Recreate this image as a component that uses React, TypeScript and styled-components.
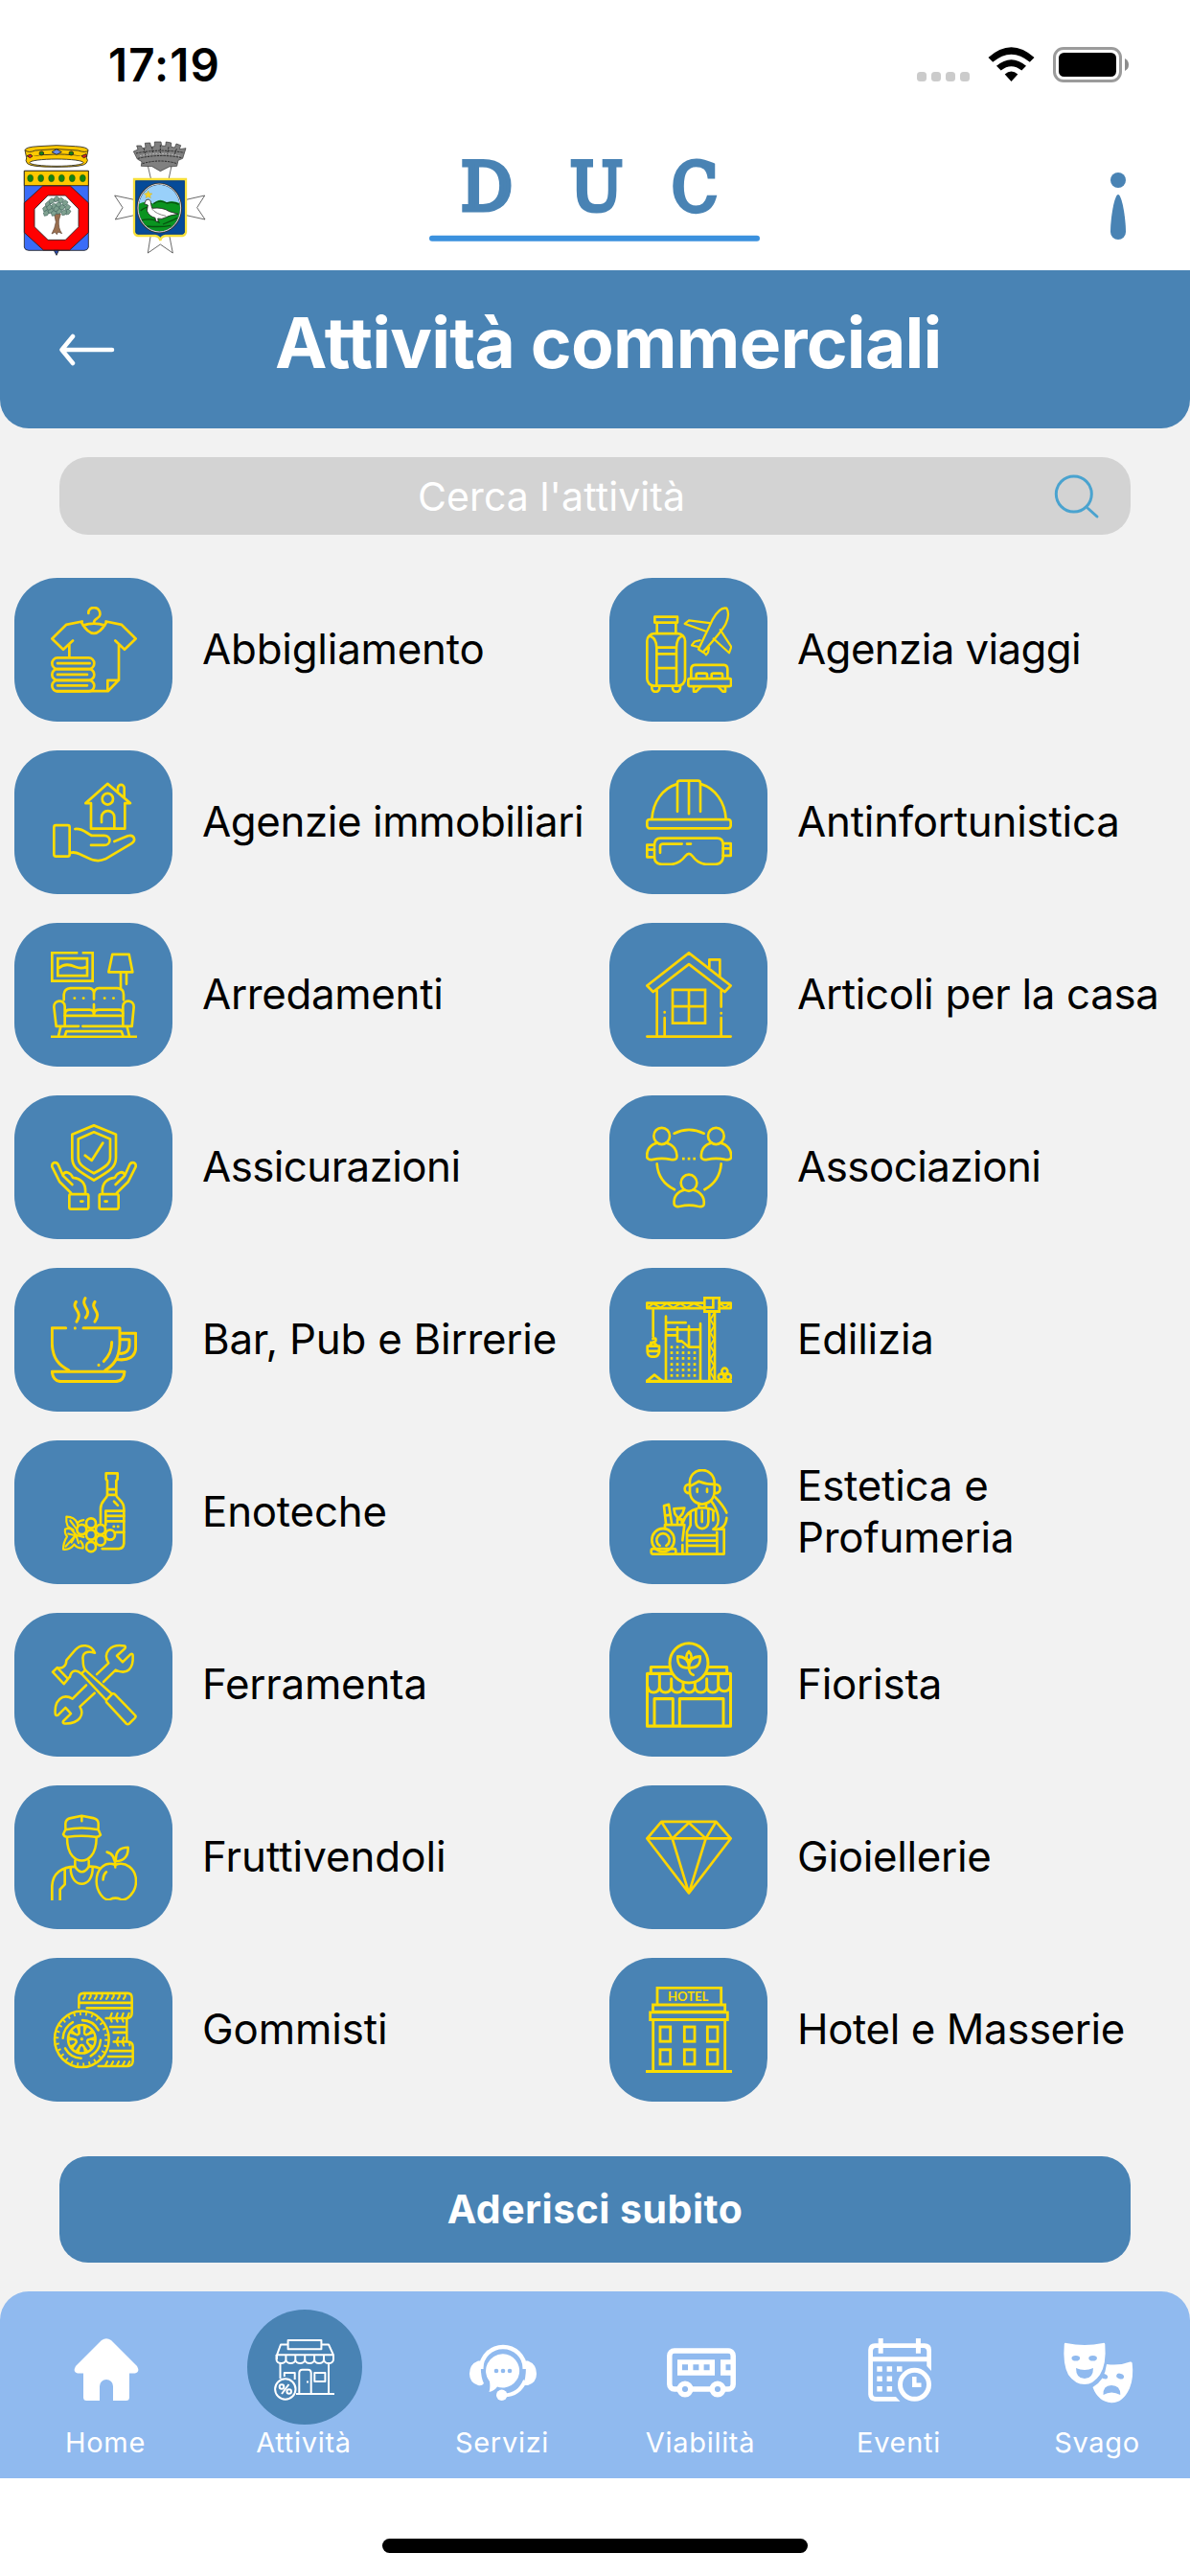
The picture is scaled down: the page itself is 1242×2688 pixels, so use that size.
import React from "react";
import styled, { createGlobalStyle, css } from "styled-components";

const BLUE = "#4983b4";
const BAR = "#90baef";
const YELLOW = "#fbdc00";
const GOLD = "#ffd500";

const GlobalStyle = createGlobalStyle`
  * {
    box-sizing: border-box;
  }

  body {
    margin: 0;
    background: #fff;
    font-family: Inter, "Liberation Sans", sans-serif;
  }
`;

const Page = styled.div`
  width: 1242px;
  height: 2688px;
  display: flex;
  flex-direction: column;
  background: #fff;
  overflow: hidden;
`;

const StatusBar = styled.div`
  height: 130px;
  flex: none;
  display: flex;
  justify-content: space-between;
  align-items: flex-start;
  padding: 39px 62px 0 113px;
`;

const Clock = styled.span`
  font-size: 47.5px;
  font-weight: 600;
  line-height: 58px;
  letter-spacing: 1.1px;
`;

const StatusIcons = styled.svg`
  width: 223px;
  height: 40px;
  margin-top: 9px;
`;

const Header = styled.header`
  height: 152px;
  flex: none;
  display: flex;
  justify-content: space-between;
  padding: 0 62px 0 10px;
`;

const Crests = styled.svg`
  width: 220px;
  height: 150px;
`;

const Logo = styled.svg`
  width: 345px;
  height: 130px;
  margin-right: 143px;
`;

const InfoIcon = styled.svg`
  width: 26px;
  height: 130px;
`;

const Main = styled.main`
  height: 2109px;
  flex: none;
  background: #f2f2f2;
`;

const TitleBar = styled.div`
  height: 165px;
  display: flex;
  align-items: flex-start;
  padding: 0 260px 0 62px;
  background: ${BLUE};
  border-radius: 0 0 30px 30px;
`;

const BackArrow = styled.svg`
  width: 58px;
  height: 34px;
  margin-top: 66px;
  flex: none;
`;

const Title = styled.h1`
  flex: 1;
  margin: 32px 0 0 167px;
  font-size: 73px;
  font-weight: 700;
  line-height: 88px;
  letter-spacing: -0.75px;
  white-space: nowrap;
  color: #fff;
`;

const Search = styled.div`
  height: 81px;
  margin: 30px 62px 45px;
  display: flex;
  align-items: center;
  justify-content: space-between;
  padding: 0 30px 0 374px;
  border-radius: 30px;
  background: #d3d3d3;
`;

const Placeholder = styled.span`
  font-size: 41px;
  line-height: 50px;
  letter-spacing: 0.1px;
  color: #fff;
  white-space: nowrap;
`;

const SearchIcon = styled.svg`
  width: 50px;
  height: 50px;
`;

const Grid = styled.div`
  display: grid;
  grid-template-columns: 621px 621px;
  grid-auto-rows: 150px;
  row-gap: 30px;
`;

const Cell = styled.div`
  display: flex;
  align-items: center;
  padding-left: 15px;
`;

const Tile = styled.div`
  width: 165px;
  height: 150px;
  flex: none;
  display: flex;
  align-items: center;
  justify-content: center;
  border-radius: 45px;
  background: ${BLUE};
`;

const TileSvg = styled.svg<{ $gold?: boolean }>`
  width: 90px;
  height: 90px;
  fill: none;
  stroke: ${({ $gold }) => ($gold ? GOLD : YELLOW)};
  stroke-width: 8;
  stroke-linecap: round;
  stroke-linejoin: round;
`;

const Label = styled.span<{ $spacing?: number }>`
  flex: 1;
  padding-left: 31px;
  font-size: 43.8px;
  line-height: 54px;
  letter-spacing: ${({ $spacing = -0.2 }) => $spacing}px;
  color: #000;
`;

const JoinButton = styled.button`
  display: block;
  width: 1118px;
  height: 111px;
  margin: 57px 62px 0;
  padding: 0 0 2px;
  border: 0;
  border-radius: 30px;
  background: ${BLUE};
  color: #fff;
  font-family: inherit;
  font-size: 41px;
  font-weight: 700;
  letter-spacing: 0.5px;
`;

const TabsBack = styled.div`
  flex: none;
  background: #f2f2f2;
`;

const Tabs = styled.nav`
  height: 195px;
  display: grid;
  grid-template-columns: repeat(6, 207px);
  padding: 19px 0 0 7px;
  border-radius: 30px 30px 0 0;
  background: ${BAR};
`;

const Tab = styled.div`
  display: flex;
  flex-direction: column;
  align-items: center;
`;

const TabCircle = styled.div<{ $active?: boolean }>`
  width: 120px;
  height: 120px;
  display: flex;
  align-items: center;
  justify-content: center;
  padding-top: 4px;
  border-radius: 50%;
  ${({ $active }) => $active && css`
    background: ${BLUE};
  `}
`;

const TabSvg = styled.svg`
  width: 72px;
  height: 72px;
  overflow: visible;
`;

const TabLabel = styled.span`
  font-size: 29px;
  line-height: 37px;
  margin-right: 1px;
  letter-spacing: 0.7px;
  color: #fff;
`;

const HomeIndicator = styled.div`
  width: 444px;
  height: 15px;
  margin: 63px auto 0;
  border-radius: 8px;
  background: #000;
`;

interface TileIconProps {
  x: number;
  y: number;
  gold?: boolean;
  children: React.ReactNode;
}

// Each drawing keeps its own origin, the drawing area is always 270 x 261
const TileIcon = ({ x, y, gold, children }: TileIconProps) => (
  <TileSvg viewBox={`${x} ${y} 270 261.3`} preserveAspectRatio="none" $gold={gold}>
    {children}
  </TileSvg>
);

const Clothes = () => (
  <TileIcon x={159} y={125} gold>
    <path d="M277 145C276 121 316 122 313 150C311 163 294 159 294 174M255 173Q294 239 333 173M260 182Q294 170 328 182" />
    <path d="M257 170L207 180L163 222L198 255L228 228M217 238V278M332 170L381 180L425 222L390 255L361 228M372 240V347L338 381H178M372 348H337V381" />
    <rect x="163" y="280" width="132" height="34" rx="17" />
    <rect x="163" y="314" width="132" height="34" rx="17" />
    <rect x="163" y="348" width="132" height="33.5" rx="17" />
    <path d="M180 297H281M180 331H273M180 364H273" />
  </TileIcon>
);

const Travel = () => (
  <TileIcon x={162} y={125}>
    <path d="M190 156H261V173H190ZM197 175V205M256 175V205" />
    <rect x="166" y="207" width="119" height="158" rx="22" />
    <path d="M176 214Q196 222 196 250V365M274 214Q258 222 258 250V365M196 249H258M196 268H258M196 311H258" />
    <path d="M181 367V372a12 11 0 0 0 24 0V367M246 367V372a12 11 0 0 0 24 0V367" />
    <path d="M327 254L372 163Q394 125 415 130Q426 148 413 176Q404 196 341 263Z" strokeWidth="7" />
    <path d="M362 175L297 167L284 177L348 199M395 195L430 247L423 265L374 222M332 227L315 231L306 242L326 247M346 257L360 249L357 264L351 271L342 262" strokeWidth="6.5" />
    <path d="M304 342V315Q304 303 316 302H407Q418 303 418 315V342M320 342V331Q320 327 326 327H349Q354 327 354 332V342M368 342V331Q368 327 374 327H397Q402 327 402 332V342" />
    <rect x="295" y="343" width="134" height="23" rx="5" />
    <path d="M312 367V382H320L336 367M411 367V382H403L388 367" />
  </TileIcon>
);

const RealEstate = () => (
  <TileIcon x={159} y={647}>
    <path d="M268 720L337 661L408 720H391V797H285V720ZM369 682V674a10 10 0 0 1 20 0V702M318 778V763a20 20 0 0 1 40 0V795" />
    <circle cx="337" cy="707" r="17" />
    <rect x="169" y="787" width="49" height="94" rx="6" />
    <path d="M235 798C262 796 270 811 287 818H326C349 818 349 847 326 847H285M358 836L400 819C420 813 427 832 412 842L330 889C302 901 285 890 250 874Q236 867 220 870" />
  </TileIcon>
);

const SafetyGear = () => (
  <TileIcon x={162} y={647}>
    <path d="M181 768C185 715 215 675 260 662M335 662C378 675 410 715 413 768M261 745V660Q261 652 269 652H325Q333 652 333 660V745M297 652V752" />
    <rect x="166" y="769" width="262" height="27" rx="8" />
    <path d="M208 826H385Q404 826 404 846V884Q402 904 380 905H350Q325 903 308 880Q297 866 286 880Q268 903 243 905H212Q190 904 189 884V846Q190 826 208 826Z" />
    <path d="M189 846H166V883H189M166 861H189M404 842H428V879H404M404 857H428M207 870V850Q208 843 216 843H275M291 843H303" />
  </TileIcon>
);

const Furniture = () => (
  <TileIcon x={159} y={1170}>
    <path d="M244 1173H163V1259H290V1173H257M181 1191H273V1243H181ZM184 1220Q205 1202 235 1216Q255 1224 271 1216" strokeLinecap="butt" strokeLinejoin="miter" />
    <path d="M352 1178H404L415 1232H340ZM378 1236V1282M396 1236V1268" />
    <path d="M200 1316V1300Q202 1282 220 1281H280Q294 1283 294 1297V1314M294 1330V1362M294 1297Q296 1282 310 1281H368Q387 1282 387 1300V1316M233 1311h1M261 1311h1M327 1311h1M355 1311h1" />
    <path d="M203 1396H176L169 1338C168 1316 200 1313 203 1335ZM385 1396H413L419 1338C420 1316 388 1313 385 1335Z" />
    <path d="M204 1358Q205 1346 218 1346H280Q294 1347 294 1358Q296 1346 310 1346H372Q384 1346 385 1358M203 1364H385M203 1396H246M259 1396H385" />
    <path d="M190 1398L183 1426M398 1398L405 1426M203 1426L208 1411H380L386 1426M159 1428H429" strokeLinecap="butt" />
  </TileIcon>
);

const House = () => (
  <TileIcon x={162} y={1170} gold>
    <path d="M166 1273L297 1174L428 1273L409 1292L297 1208L185 1292ZM361 1218V1194H394V1245M197 1288V1426M398 1288V1337M398 1356v1M398 1371V1426M221 1353v1M221 1371V1426M166 1427H428" />
    <path d="M246 1286H348V1387H246ZM297 1286V1387M246 1336H348" strokeLinejoin="miter" />
  </TileIcon>
);

const Hand = () => (
  <>
    <path d="M222 333L187 300L163 254C161 238 180 237 184 252L198 282L226 308M199 276C205 266 222 272 228 287C255 290 270 305 267 335" />
    <rect x="217" y="337" width="60" height="45" rx="5" />
    <path d="M253 359H259" />
  </>
);

const Insurance = () => (
  <TileIcon x={159} y={125}>
    <path d="M294 129L363 156V227C363 255 345 266 294 295C243 266 226 255 226 227V156Z" />
    <path d="M294 149L345 170V225C345 245 332 254 294 274C256 254 245 245 245 225V170ZM266 220L287 235L322 182" />
    <Hand />
    <g transform="translate(588 0) scale(-1 1)">
      <Hand />
    </g>
  </TileIcon>
);

const Person = () => (
  <>
    <circle cx="212" cy="161" r="25" />
    <path d="M198 182C175 187 163 205 166 226Q170 235 185 232Q212 226 240 232Q257 235 259 226C262 205 248 187 226 182" />
  </>
);

const Associations = () => (
  <TileIcon x={162} y={125}>
    <Person />
    <g transform="translate(170 0)"><Person /></g>
    <g transform="translate(85 142)"><Person /></g>
    <path d="M251 153Q297 131 344 153M197 245C200 285 220 308 252 323M398 245C395 285 375 308 346 323" />
    <path d="M276 230h8M293 230h8M310 230h8" strokeLinecap="butt" />
  </TileIcon>
);

const Coffee = () => (
  <TileIcon x={159} y={647} gold>
    <g strokeWidth="9">
      <path d="M238 663C222 685 262 690 240 723M267 652C251 676 290 684 268 711M297 663C281 685 321 690 297 723" />
      <path d="M206 742H163V790C165 835 185 855 215 870M261 742H375V790C373 835 355 855 330 870M235 742v.5M309 854v.5" />
      <path d="M378 758H425V800C425 830 400 842 366 837M378 777H405V795C404 812 392 821 375 819M350 785C350 810 343 825 325 843" />
      <path d="M163 874H390C389 892 380 904 362 904H190C175 904 164 892 163 874Z" />
    </g>
  </TileIcon>
);

const dotRows = [800, 817, 834, 852, 869, 886];
const dotCols = [243, 261, 279, 297, 315];

const Construction = () => (
  <TileIcon x={162} y={647}>
    <path d="M345 666H166V682H345M392 666H428V682H392M361 692V900M378 692V900" />
    <path d="M168 680L186 668L208 680L228 668L248 680L270 668L290 680L312 668L342 680M394 668L410 679L427 668" strokeWidth="6" />
    <path d="M376 698L364 716L376 736L364 756L376 776L364 796L376 816L364 836L376 856L364 876L376 896" strokeWidth="6" />
    <path d="M346 651H392V692H346ZM373 654V680H350" strokeLinejoin="miter" />
    <path d="M185 685V768M184 775Q196 770 193 781Q188 788 178 786M171 797L185 785L199 797M167 797H204V814Q202 828 190 829H180Q168 828 167 814ZM172 812H200" />
    <path d="M225 707V900M333 729V900M225 726H287M225 747H333M225 764H260M261 740V782H275L297 800H333M297 737V800" />
    {dotRows.map((y, i) =>
      dotCols
        .filter((x) => i > 0 || x < 290)
        .map((x) => <path key={`${x}-${y}`} d={`M${x - 4} ${y}h8`} strokeLinecap="butt" />)
    )}
    <path d="M166 902L189 884L213 902" />
    <path d="M162 904H432" strokeWidth="10" strokeLinecap="butt" />
    <circle cx="398" cy="890" r="9" />
    <circle cx="420" cy="890" r="9" />
    <circle cx="409" cy="873" r="9" />
  </TileIcon>
);

const Wine = () => (
  <TileIcon x={159} y={1170}>
    <path d="M336 1250V1205L332 1200V1183H368V1200L364 1205V1250C370 1264 388 1266 388 1290V1395Q386 1411 372 1411H320M336 1250C330 1264 315 1268 315 1290V1332M336 1231H364M336 1248H364M357 1268L369 1280" />
    <path d="M388 1297H331V1340M331 1312H388M331 1328H388M356 1344h1M369 1344h1M364 1361H388" />
    <circle cx="285" cy="1334" r="15" />
    <circle cx="256" cy="1353" r="15" />
    <circle cx="315" cy="1353" r="15" />
    <circle cx="285" cy="1369" r="15" />
    <circle cx="345" cy="1369" r="15" />
    <circle cx="315" cy="1386" r="15" />
    <circle cx="285" cy="1405" r="15" />
    <path d="M262 1324Q248 1326 242 1334Q234 1314 208 1314Q206 1330 212 1343L230 1354M240 1352L220 1326M242 1334L244 1345M230 1356Q216 1346 204 1352Q202 1366 210 1374Q198 1392 198 1413Q220 1415 232 1398Q244 1412 260 1409Q262 1398 252 1388M206 1404L236 1371L214 1366M236 1371L224 1392M238 1371L246 1394M238 1369L226 1356M238 1370L262 1376" strokeWidth="6.5" />
  </TileIcon>
);

const Beauty = () => (
  <TileIcon x={162} y={1170}>
    <path d="M300 1218C294 1158 382 1158 377 1218M300 1218V1240C305 1288 372 1288 377 1240V1218M301 1222L328 1207Q350 1216 376 1216M299 1216C279 1216 279 1243 299 1243M379 1216C400 1216 400 1243 379 1243M323 1230V1239M354 1230V1239M328 1278V1287H351V1278" />
    <path d="M379 1255Q405 1280 415 1302M415 1318C413 1345 395 1357 373 1352C386 1345 392 1335 388 1310Q382 1285 368 1268" />
    <path d="M322 1290C300 1295 285 1310 278 1332M355 1290Q366 1288 376 1298M319 1294V1330C320 1357 357 1357 358 1330V1294M338 1297V1330M302 1302V1340L291 1360V1425M373 1302V1325" />
    <path d="M295 1371H385M295 1387H385M295 1402H385M385 1362V1425M388 1352H407V1427H256" />
    <path d="M225 1335L219 1281L234 1277L243 1333M223 1311L238 1308M250 1290L283 1288L277 1305L264 1320L253 1305ZM261 1333V1322H275V1333M222 1347V1339H283L277 1386M277 1400V1425" />
    <circle cx="216" cy="1385" r="35" />
    <path d="M206 1402A20 20 0 1 1 226 1402" />
    <rect x="179" y="1411" width="77" height="16" rx="6" />
  </TileIcon>
);

const Tools = () => (
  <TileIcon x={159} y={125}>
    <path d="M180 204C196 208 208 198 208 181L235 151C252 131 285 132 297 159C272 152 256 158 260 182C260 195 263 205 267 211L255 222C238 208 222 212 219 232L211 237" strokeWidth="7.5" />
    <path d="M165 217L179 204L213 238L200 253ZM267 211L350 283M255 222L332 302M352 283L333 302V308L396 374Q400 377 404 374L422 357Q427 352 423 348L360 285Q356 281 352 283" strokeWidth="7.5" />
    <path d="M303 224L340 190C320 160 345 130 390 138Q395 141 391 146L366 168L384 187L409 163Q416 160 416 168C418 205 400 228 362 211L324 247" strokeWidth="7.5" />
    <path d="M296 281L250 322C265 345 250 375 202 373Q195 372 198 366L222 343L205 325L181 348Q173 350 173 342C170 305 195 280 227 298L270 257" strokeWidth="7.5" />
  </TileIcon>
);

const Florist = () => (
  <TileIcon x={162} y={125}>
    <g strokeWidth="9">
      <circle cx="297" cy="190" r="60" />
      <path d="M238 202H178V219M356 202H416V219M242 222H166.5V381H427.5V222H352M189 378V298H247V378M268 378V298H405V378" />
      <path d="M168 262a18.5 17 0 0 0 37 0a18.5 17 0 0 0 37 0a18.5 17 0 0 0 37 0a18.5 17 0 0 0 37 0a18.5 17 0 0 0 37 0a18.5 17 0 0 0 37 0a18.5 17 0 0 0 36 0M205 226V262M242 238V262M279 250V262M316 250V262M353 238V262M389 226V262" />
      <path d="M297 155Q281 170 297 184Q313 170 297 155M297 204C270 206 260 192 262 170C284 170 297 182 297 204C297 182 310 170 332 170C334 192 324 206 297 204Q298 222 311 226" strokeWidth="8" />
    </g>
  </TileIcon>
);

const Greengrocer = () => (
  <TileIcon x={159} y={647}>
    <path d="M205 690V675Q206 662 222 659L256 652L292 659Q307 662 308 675V690M256 652V668M205 694Q256 684 308 694L315 710Q308 718 298 716Q256 710 212 716Q202 717 198 708Z" strokeWidth="7.5" />
    <path d="M210 718C210 775 240 788 256 788C272 788 302 775 302 718M235 788V806Q245 822 256 822Q268 822 278 806V788M221 808C220 875 292 875 290 808" strokeWidth="7.5" />
    <path d="M163 907V865C165 825 195 806 235 806M278 806Q300 805 312 811M203 812V860L188 875V907" />
    <path d="M361 801C330 788 302 812 302 850C302 880 325 912 345 905Q361 898 378 905C400 912 426 880 426 850C426 812 392 788 361 801M361 808C361 780 350 765 335 762M363 790C360 760 375 748 401 748C402 775 390 788 363 790M333 822Q322 832 323 846" strokeWidth="7.5" />
  </TileIcon>
);

const Jewelry = () => (
  <TileIcon x={162} y={647} gold>
    <path d="M211 670H382L428 721L297 886L166 721ZM166 721H428M211 670L245 721L297 673L350 721L382 670M245 721L297 886L350 721" />
  </TileIcon>
);

const spokes = [0, 72, 144, 216, 288];

const Tyres = () => (
  <TileIcon x={159} y={1170}>
    <g strokeWidth="7.5">
      <circle cx="256" cy="1329" r="85" />
      <circle cx="256" cy="1329" r="77" strokeDasharray="5.5 13.1" strokeWidth="10" strokeLinecap="butt" />
      <circle cx="256" cy="1329" r="43" />
      <circle cx="256" cy="1329" r="2" strokeWidth="6" />
      {spokes.map((a) => (
        <path key={a} transform={`rotate(${a} 256 1329)`} d="M248 1290V1312Q241 1322 226 1305M264 1290V1312Q271 1322 286 1305" strokeWidth="6.5" />
      ))}
      <path d="M197 1326A60 60 0 0 1 228 1278M258 1272A58 58 0 0 1 308 1302M315 1332A60 60 0 0 1 284 1380M254 1387A60 60 0 0 1 204 1357" />
      <path d="M247 1234V1205Q247 1190 262 1190H400Q413 1190 413 1205V1250Q413 1264 400 1266M249 1219H411M272 1235H411" />
      <path d="M332 1266H400M397 1270V1335M345 1292H395M356 1309H395M356 1337H400Q416 1338 416 1352V1397Q414 1411 400 1411H308M345 1365H414M339 1382H414" />
      <path d="M266 1194v6l-5 7M284 1194v6l-5 7M302 1194v6l-5 7M320 1194v6l-5 7M338 1194v6l-5 7M356 1194v6l-5 7M374 1194v6l-5 7M392 1194v6l-5 7" strokeWidth="6.5" />
      <path d="M350 1251l-5 13l5 12M368 1251l-5 13l5 12M386 1251l-5 13l5 12M404 1251l-5 13M370 1324l-5 13l5 12M388 1324l-5 13l5 12M406 1340l0 8" strokeWidth="6.5" />
      <path d="M336 1397l-6 12M354 1397l-6 12M372 1397l-6 12M390 1397l-6 12M406 1397l-6 12" strokeWidth="6.5" />
    </g>
  </TileIcon>
);

const Hotel = () => (
  <TileIcon x={162} y={1170}>
    <g strokeWidth="8.5" strokeLinejoin="miter">
      <path d="M198 1223V1174H398V1223M184.5 1225H410V1246H184.5ZM176 1248H418V1270H176ZM185 1272V1425M410 1272V1425" />
      <path d="M162 1427H432" strokeLinecap="butt" />
      {[207, 283, 355].map((x) => (
        <React.Fragment key={x}>
          <rect x={x} y="1292" width="32" height="44" />
          <rect x={x} y="1361" width="32" height="44" />
        </React.Fragment>
      ))}
    </g>
    <text x="231" y="1214" fontFamily="Lato, sans-serif" fontWeight="700" fontSize="39" textLength="127" lengthAdjust="spacingAndGlyphs" fill={YELLOW} stroke="none">HOTEL</text>
  </TileIcon>
);

const categories: { name: string; icon: React.FC; spacing?: number }[] = [
  { name: "Abbigliamento", icon: Clothes },
  { name: "Agenzia viaggi", icon: Travel, spacing: -0.6 },
  { name: "Agenzie immobiliari", icon: RealEstate, spacing: -0.4 },
  { name: "Antinfortunistica", icon: SafetyGear },
  { name: "Arredamenti", icon: Furniture, spacing: -0.3 },
  { name: "Articoli per la casa", icon: House, spacing: -0.3 },
  { name: "Assicurazioni", icon: Insurance, spacing: -0.55 },
  { name: "Associazioni", icon: Associations, spacing: -0.5 },
  { name: "Bar, Pub e Birrerie", icon: Coffee },
  { name: "Edilizia", icon: Construction },
  { name: "Enoteche", icon: Wine },
  { name: "Estetica e Profumeria", icon: Beauty },
  { name: "Ferramenta", icon: Tools },
  { name: "Fiorista", icon: Florist },
  { name: "Fruttivendoli", icon: Greengrocer, spacing: 0 },
  { name: "Gioiellerie", icon: Jewelry, spacing: -0.3 },
  { name: "Gommisti", icon: Tyres, spacing: -0.1 },
  { name: "Hotel e Masserie", icon: Hotel, spacing: -0.4 },
];

const HomeIcon = () => (
  <TabSvg viewBox="0 0 72 72" fill="#fff">
    <path d="M31 6Q36 2.500 41 6L68 33Q71.5 39 66 40.5H60V65.5Q60 69 56.5 69H43V54A7 7 0 0 0 29 54V69H15.5Q12 69 12 65.5V40.5H6Q.5 39 4 33Z" />
  </TabSvg>
);

const ShopIcon = () => (
  <TabSvg viewBox="0 0 72 72" fill="none" stroke="#fff" strokeWidth="2" strokeLinejoin="round">
    <path d="M18.6 6H53.4V15.3H18.6ZM18.5 10.5H11L7 21.3V26M53.5 10.5H61L66 21.3V26M6.5 21.3H66" />
    <path d="M6.5 21V26a4.9 4 0 0 0 9.9 0a4.9 4 0 0 0 9.9 0a4.9 4 0 0 0 9.9 0a4.9 4 0 0 0 9.9 0a4.9 4 0 0 0 9.9 0a4.9 4 0 0 0 10 0M16.4 22V27M26.3 22V27M36.2 22V27M46.1 22V27M56 22V27" />
    <path d="M10.5 30V46M61 30V62M30.3 62V40Q30.5 36.8 33.5 36.8H39.5Q42.5 36.8 42.7 40V62M38 49.5H40M46.3 40H57.4V49H46.3ZM14.8 44V40H25.7V47M27 62H67" />
    <circle cx="15.8" cy="57" r="10.7" />
    <path d="M19.5 52L12 62" />
    <circle cx="12" cy="54.5" r="2.3" />
    <circle cx="19.7" cy="59.5" r="2.3" />
  </TabSvg>
);

const SupportIcon = () => (
  <TabSvg viewBox="0 0 72 72" fill="#fff">
    <path d="M13.3 36V35A22.7 22 0 0 1 58.7 35V36" fill="none" stroke="#fff" strokeWidth="4.5" />
    <path d="M10 27.5H13Q12 43 16 51Q14 54 10 53Q1 50 1 41Q1 31 10 27.5ZM62 27.5H59.5Q61 42 57 53H62Q71 50 71 41Q71 31 62 27.5Z" />
    <path d="M59 48Q53 63 37 63.5" fill="none" stroke="#fff" strokeWidth="4" />
    <circle cx="34.7" cy="63.3" r="5.7" />
    <path d="M36 20.3A17.6 17.6 0 1 1 30 54.6Q27 59 21.5 60Q23 55 22 49A17.6 17.6 0 0 1 36 20.3Z" />
    <g fill={BAR}>
      <circle cx="29" cy="38" r="2.3" />
      <circle cx="36" cy="38" r="2.3" />
      <circle cx="43" cy="38" r="2.3" />
    </g>
  </TabSvg>
);

const BusIcon = () => (
  <TabSvg viewBox="0 0 72 72">
    <rect x="2.8" y="17" width="66.4" height="40" rx="5" fill="none" stroke="#fff" strokeWidth="5.5" />
    <path d="M11 26.3H50V42.7H11ZM56 26.3H70V42.7H56Z" fill="#fff" />
    <path d="M16 31.3h6v6h-6ZM27.4 31.3h6v6h-6ZM38.6 31.3h6v6h-6ZM61.5 31.3h5v6h-5Z" fill={BAR} />
    <circle cx="19" cy="57" r="5.8" fill={BAR} stroke="#fff" strokeWidth="5.5" />
    <circle cx="53" cy="57" r="5.8" fill={BAR} stroke="#fff" strokeWidth="5.5" />
  </TabSvg>
);

const EventsIcon = () => (
  <TabSvg viewBox="0 0 72 72">
    <path d="M10 9.3H62Q69 9.5 69 16V38L64.3 33V17.5Q64 14 61 14H11Q8 14 8 17.5V61.5Q8 65 11 65H32L36.5 69.7H10Q3.5 69 3.2 62.5V16Q3.5 9.5 10 9.3Z" fill="#fff" />
    <path d="M6 25.7H67M16.2 4V19.7M55.4 4V19.7" stroke="#fff" strokeWidth="5" />
    <path d="M12.3 33.2h5.5v5.5h-5.5ZM22.6 33.2h5.5v5.5h-5.5ZM33 33.2h5.5v5.5h-5.5ZM12.3 43.6h5.5v5.5h-5.5ZM22.6 43.6h5.5v5.5h-5.5ZM12.3 54h5.5v5.5h-5.5ZM22.6 54h5.5v5.5h-5.5Z" fill="#fff" />
    <circle cx="51.5" cy="52.3" r="15" fill="none" stroke="#fff" strokeWidth="5" />
    <path d="M51.3 44V52.7H58.5" fill="none" stroke="#fff" strokeWidth="4.5" />
  </TabSvg>
);

const MasksIcon = () => (
  <TabSvg viewBox="0 0 72 72" fill="#fff">
    <path d="M.8 10Q1 8.3 3 9Q22 13 41 9Q43 8.3 43.3 10Q45 31 38 42Q31 52 22 52Q12 52 5 42Q-1 31 .8 10Z" />
    <path d="M45 31Q58 33 69.5 28.5Q71.5 28 71.7 30Q73.5 45 69 56Q62 71.5 50 71.3Q36 70 30.5 55Q43 48 45 31Z" />
    <g fill={BAR}>
      <ellipse cx="12.8" cy="24.7" rx="4.3" ry="2.8" />
      <ellipse cx="30.6" cy="24.7" rx="4.3" ry="2.8" />
      <path d="M13 35Q22 39 31 35Q31 46 22 46Q13 46 13 35Z" />
      <ellipse cx="42.5" cy="43.5" rx="4" ry="2.6" transform="rotate(20 42 43)" />
      <ellipse cx="59" cy="43.6" rx="4" ry="2.8" transform="rotate(15 59 44)" />
      <path d="M41.5 63Q41 53 50 53Q59.5 53 59.3 63Q50 58 41.5 63Z" />
    </g>
  </TabSvg>
);

const tabs: { name: string; icon: React.FC; active?: boolean }[] = [
  { name: "Home", icon: HomeIcon },
  { name: "Attività", icon: ShopIcon, active: true },
  { name: "Servizi", icon: SupportIcon },
  { name: "Viabilità", icon: BusIcon },
  { name: "Eventi", icon: EventsIcon },
  { name: "Svago", icon: MasksIcon },
];

const foliage = [
  [-34, 0], [-26, -14], [-15, -24], [0, -30], [14, -26], [27, -18], [35, -4], [36, 10], [-32, 14],
  [-18, 6], [-8, -8], [6, -12], [18, -4], [24, 12], [-8, 14], [8, 8], [-22, -4], [0, 0],
];

const CoatsOfArms = () => (
  <Crests viewBox="0 0 660 450">
    <g stroke="#222" strokeWidth="2.5" strokeLinejoin="round">
      {/* Puglia */}
      <path d="M48 80Q50 70 90 68Q147 62 205 68Q244 70 246 80L241 104Q248 112 240 121Q232 133 147 133Q66 133 56 122Q48 114 53 104Z" fill="#ffc800" />
      <ellipse cx="147" cy="119" rx="84" ry="11" fill="#fff" />
      <path d="M48 80Q60 90 80 81Q147 72 214 81Q240 90 246 80M53 104Q100 92 147 93Q200 92 241 104" fill="none" />
      <path d="M54 103Q100 98 147 98Q200 98 240 103" fill="none" stroke="#ffc800" strokeWidth="5" />
      <ellipse cx="100" cy="90" rx="7" ry="6" fill="#168016" />
      <ellipse cx="193" cy="90" rx="7" ry="6" fill="#168016" />
      <path d="M132 86L147 77L163 86L147 94Z" fill="#6a8fe8" />
      <path d="M54 98L66 93L72 99L64 104ZM225 98L240 92L242 100L232 104Z" fill="#e02020" />
      <path d="M46 145H247V384Q244 394 234 394H60Q48 394 46 384Z" fill="#3a6cf8" />
      <path d="M46 145H247V191H46Z" fill="#ffc800" />
      <path d="M104 192H190L247 245V338L188 393H106L46 338V245Z" fill="#f00" />
      <path d="M120 222H175L216 264V320L175 361H120L78 320V264Z" fill="#fff" />
      <path d="M139 394H154L147 409Z" fill="#274bb0" />
    </g>
    {[65, 98, 131, 163, 196, 229].map((x) => (
      <ellipse key={x} cx={x} cy="168" rx="9" ry="11" fill="#128212" stroke="#2a5a10" strokeWidth="1.5" />
    ))}
    <path d="M140 280L145 305Q142 325 132 342L142 337L148 344L152 336L164 341Q152 325 154 300L160 280Z" fill="#9a6f4f" stroke="#5d4230" strokeWidth="2" />
    {foliage.map(([dx, dy]) => (
      <path key={`${dx},${dy}`} d={`M${147 + dx - 9} ${262 + dy}l9 -8l9 7l-6 9l-9 2z`} fill="#7fa190" stroke="#41645a" strokeWidth="2" />
    ))}

    {/* Town crest */}
    <g fill="#fff" stroke="#333" strokeWidth="2.2" strokeLinejoin="miter">
      <path d="M432 125H508L498 172H443ZM390 235L329 222L354 260L331 297L390 284ZM553 235L611 222L587 260L612 297L553 284ZM442 345L433 402L472 375L511 402L500 345Z" />
    </g>
    <path d="M388 84L402 78L398 66L412 66L416 74L426 72L424 58L440 57L443 70L454 68L454 54L474 54L476 66L488 67L490 54L506 57L506 70L517 72L522 60L536 65L532 77L552 74L542 106L528 112L524 130L500 132L472 146L446 131L412 130L414 116L400 108Z" fill="#808080" stroke="#333" strokeWidth="2" />
    <path d="M396 90Q472 74 546 88M402 106Q472 90 540 104M416 122Q472 106 524 122M420 74L426 96M446 70L449 92M472 64V90M498 70L494 92M523 76L516 96" fill="none" stroke="#2b2b2b" strokeWidth="3" strokeDasharray="7 3" />
    <path d="M408 98Q472 84 534 98" fill="none" stroke="#c4c4c4" strokeWidth="3" strokeDasharray="5 5" />
    <path d="M390 171H552V337Q550 347 541 348H488Q474 350 472 363Q470 350 456 348H402Q392 347 390 337Z" fill="#054b99" stroke="#f6df3b" strokeWidth="7" />
    <path d="M396 177H547V338L541 342H402L396 338Z" fill="#054b99" stroke="#17376b" strokeWidth="1.5" />
    <clipPath id="oval"><ellipse cx="469" cy="261" rx="65" ry="73" /></clipPath>
    <g clipPath="url(#oval)">
      <rect x="400" y="185" width="140" height="155" fill="#99d0fa" />
      <path d="M400 250Q430 236 450 248Q470 226 492 244Q515 236 540 250V340H400Z" fill="#0a9420" />
      <path d="M450 248Q470 234 492 246Q512 240 530 250M410 270Q430 254 440 262M410 300Q450 290 470 308M480 312Q510 300 525 292M430 318Q470 322 505 316" fill="none" stroke="#07520f" strokeWidth="4" />
    </g>
    <ellipse cx="469" cy="261" rx="68" ry="76" fill="none" stroke="#333" strokeWidth="6" />
    <ellipse cx="469" cy="261" rx="67" ry="75" fill="none" stroke="#ddd" strokeWidth="3" />
    <path d="M424 244Q424 234 435 234Q444 236 443 250L446 262Q480 258 500 272L528 280Q500 284 490 290Q476 298 464 294L466 303H458L456 292Q438 288 430 270L433 252L422 248Z" fill="#fff" stroke="#222" strokeWidth="2.5" />
    <path d="M446 264Q458 280 490 286" fill="none" stroke="#444" strokeWidth="2" />
    <path d="M434 207L438 215L447 216L440 222L442 230L434 226L426 230L428 222L421 216L430 215Z" fill="#f5d327" stroke="#c9a416" strokeWidth="1" />
  </Crests>
);

export default function App() {
  return (
    <>
      <GlobalStyle />
      <Page>
        <StatusBar>
          <Clock>17:19</Clock>
          <StatusIcons viewBox="957 48 223 40">
            {[957, 972, 987, 1002].map((x) => (
              <rect key={x} x={x} y="75" width="10" height="10" rx="3.5" fill="#cbcbcb" />
            ))}
            <path d="M1031.5 60Q1055.5 38.5 1079.5 60L1074.8 64.8Q1055.5 48.5 1036.2 64.8ZM1040 68.8Q1055.5 55.5 1071 68.8L1066.3 73.5Q1055.5 65 1044.7 73.5ZM1048.7 77.5Q1055.5 71.5 1062.3 77.5L1055.5 85Z" fill="#000" />
            <rect x="1100.5" y="50.5" width="69" height="34" rx="9.5" fill="none" stroke="#9b9b9b" strokeWidth="3" />
            <rect x="1105" y="55" width="60" height="25" rx="5.5" fill="#000" />
            <path d="M1174 61Q1178 63 1178 67.5Q1178 72 1174 74Z" fill="#8c8c8c" />
          </StatusIcons>
        </StatusBar>
        <Header>
          <CoatsOfArms />
          <Logo viewBox="448 130 345 130">
            <g fontFamily="DejaVu Serif, serif" fontSize="70" fill={BLUE} stroke={BLUE} strokeWidth="5">
              <text x="481" y="219" textLength="54" lengthAdjust="spacingAndGlyphs">D</text>
              <text x="595" y="219" textLength="55" lengthAdjust="spacingAndGlyphs">U</text>
              <text x="701" y="220" textLength="48" lengthAdjust="spacingAndGlyphs">C</text>
            </g>
            <rect x="448" y="245.7" width="345" height="6" rx="3" fill="#3b91de" />
          </Logo>
          <InfoIcon viewBox="1154 130 26 130" fill={BLUE}>
            <circle cx="1167" cy="188" r="8" />
            <path d="M1167 203C1171 203 1175 228 1175 242A8 8 0 0 1 1159 242C1159 228 1163 203 1167 203Z" />
          </InfoIcon>
        </Header>
        <Main>
          <TitleBar>
            <BackArrow viewBox="0 0 58 34" fill="none" stroke="#fff" strokeWidth="4.5" strokeLinecap="round" strokeLinejoin="round">
              <path d="M55 17H3M14 3L2.5 17L14 31" />
            </BackArrow>
            <Title>Attività commerciali</Title>
          </TitleBar>
          <Search>
            <Placeholder>Cerca l'attività</Placeholder>
            <SearchIcon viewBox="0 0 50 50" fill="none" stroke="#4aa3cf" strokeWidth="3" strokeLinecap="round">
              <circle cx="20.8" cy="22.5" r="18.5" />
              <path d="M35.5 37.5L45 46" />
            </SearchIcon>
          </Search>
          <Grid>
            {categories.map(({ name, icon: Icon, spacing }) => (
              <Cell key={name}>
                <Tile>
                  <Icon />
                </Tile>
                <Label $spacing={spacing}>{name}</Label>
              </Cell>
            ))}
          </Grid>
          <JoinButton>Aderisci subito</JoinButton>
        </Main>
        <TabsBack>
          <Tabs>
            {tabs.map(({ name, icon: Icon, active }) => (
              <Tab key={name}>
                <TabCircle $active={active}>
                  <Icon />
                </TabCircle>
                <TabLabel>{name}</TabLabel>
              </Tab>
            ))}
          </Tabs>
        </TabsBack>
        <HomeIndicator />
      </Page>
    </>
  );
}
